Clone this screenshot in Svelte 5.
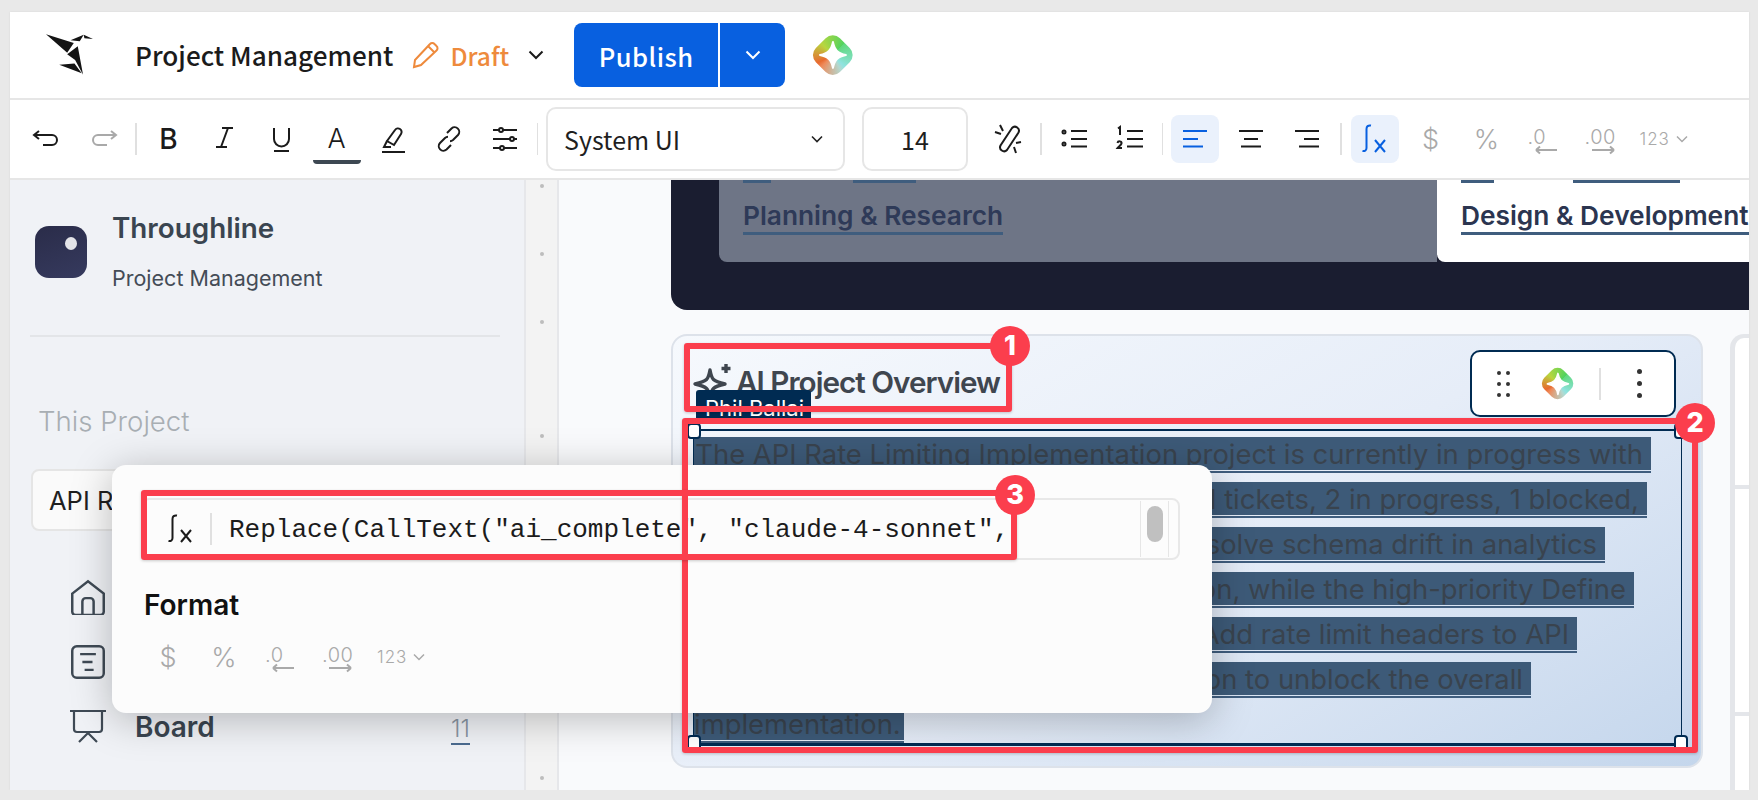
<script>
  const ic = {
    undo: "M8 8l-5 4 5 4M3 12h18a5 5 0 0 1 0 10H12",
    redo: "M24 8l5 4-5 4M29 12H11a5 5 0 0 0 0 10h9",
    italic: "M13 5h11M7 24h11M19 5l-7 19",
    underline: "M9 5v11a7.500 7.500 0 0 0 15 0V5M9 28h15",
    marker: "M10 18L18 7a3.500 3.500 0 0 1 6 4l-7 11-7-4zM10 18l-3 6h7M5 29h23",
    link: "M14 10l4.500-4.500a4.600 4.600 0 0 1 6.500 6.500l-5 5a4.600 4.600 0 0 1-3 1.200M18 22l-4.500 4.500a4.600 4.600 0 0 1-6.500-6.500l5-5a4.600 4.600 0 0 1 3-1.200",
    sliders: "M4 7h6M14 7h14M4 16h17M25 16h3M4 25h7M15 25h13M10 7a2 2 0 1 0 4 0a2 2 0 1 0-4 0M21 16a2 2 0 1 0 4 0a2 2 0 1 0-4 0M11 25a2 2 0 1 0 4 0a2 2 0 1 0-4 0",
    unlink: "M20 5a4 4 0 0 1 6.500 4.500L15 27a4 4 0 0 1-6.500-4.500zM8 2l3 6M3 9l6 2M29 19l-5 1M24 30l-2-6",
    bullets: "M13 8h16M13 16h16M13 23.500h16M4.500 9a1.500 1.500 0 1 0 3 0a1.500 1.500 0 1 0-3 0M4.500 21a1.500 1.500 0 1 0 3 0a1.500 1.500 0 1 0-3 0",
    numbered: "M13 8h16M13 16h16M13 23.500h16M4 5.500l2-1.500v8M3.500 20c.5-2.500 4.500-2 4 .5-.3 1.500-3 3-4 4.500h4.500",
    alignLeft: "M4 8h24M4 16h15M4 23.500h20",
    alignCenter: "M4 8h24M9 16h14M6 23.500h20",
    alignRight: "M4 8h24M13 16h15M8 23.500h20",
    fx: "M12 2.500c-3-.5-4.500 1-4.500 3.500v19c0 2-1.500 3.500-4 3M16 17l10 12M26 17L16 29",
    decLess: "M9 27h21M9 27l4-3.500M9 27l4 3.500",
    decMore: "M9 27h22M31 27l-4-3.500M31 27l-4 3.500",
    home: "M2 13L16 2l14 11v16a3 3 0 0 1-3 3H5a3 3 0 0 1-3-3zM11 32V20a3 3 0 0 1 3-3h4a3 3 0 0 1 3 3v12",
    list: "M6 2h20a4 4 0 0 1 4 4v20a4 4 0 0 1-4 4H6a4 4 0 0 1-4-4V6a4 4 0 0 1 4-4zM9 9h14M11 16h9M13 23h8",
    board: "M0 2h36M4 2v18a3 3 0 0 0 3 3h22a3 3 0 0 0 3-3V2M9 33l9-9 9 9"
  };

  const aiStar = "M15 7c1 5.500 2 8 3.500 9.500 2 2 5 3 11.500 4.500-6.500 1.500-9.500 2.500-11.500 4.500-1.500 1.500-2.500 4-3.500 9.500-1-5.500-2-8-3.500-9.500-2-2-5-3-11.500-4.500 6.500-1.500 9.500-2.500 11.500-4.500 1.500-1.500 2.500-4 3.500-9.500zM31 1v9M26.500 5.500h9";

  const nav = [
    { icon: ic.home, box: 32, label: "Overview" },
    { icon: ic.list, box: 32, label: "Backlog" },
    { icon: ic.board, box: 36, label: "Board", count: 11 }
  ];

  // gaps between the grip dots in the gutter
  const gripGaps = [4, 64, 64, 110, 64, 64, 64, 64, 66];

  const lines = [
    { text: "The API Rate Limiting Implementation project is currently in progress with", width: 957 },
    { text: "It has 12 total tickets, 2 in progress, 1 blocked,", width: 953 },
    { text: "and work is underway to resolve schema drift in analytics", width: 911 },
    { text: "ingestion, while the high-priority Define", width: 940 },
    { text: "Rate Limit Tiers task and Add rate limit headers to API", width: 883 },
    { text: "Documentation need attention to unblock the overall", width: 837 },
    { text: "implementation.", width: 210 }
  ];

  const handles = ["tl", "tr", "bl", "br"];
  const marks = [
    { n: 1, cls: "m1" },
    { n: 2, cls: "m2" },
    { n: 3, cls: "m3" }
  ];
</script>

{#snippet icon(d, cls = "")}
  <svg class="ico {cls}" viewBox="0 0 32 32" fill="none" stroke="currentColor" stroke-width="2"><path {d} /></svg>
{/snippet}

{#snippet sparkle(cls)}
  <span class="sparkle {cls}">
    <span class="diamond"></span>
    <svg viewBox="0 0 32 32"><path d="M16 3c1.500 8 5 11.500 13 13-8 1.500-11.500 5-13 13-1.500-8-5-11.500-13-13 8-1.500 11.500-5 13-13z" fill="#fff" stroke="#fff" stroke-width="2" stroke-linejoin="round" /></svg>
  </span>
{/snippet}

{#snippet formatBtns()}
  <span class="btn muted"><span class="fmt">$</span></span>
  <span class="btn muted"><span class="fmt">%</span></span>
  <span class="btn muted">
    <span class="dectext one">.0</span>
    {@render icon(ic.decLess, "decarrow")}
  </span>
  <span class="btn muted">
    <span class="dectext two">.00</span>
    {@render icon(ic.decMore, "decarrow")}
  </span>
  <span class="btn muted numfmt">
    123
    <svg class="chev" viewBox="0 0 12 8" fill="none" stroke="currentColor" stroke-width="1.500"><path d="M1 1.500l5 5 5-5" /></svg>
  </span>
{/snippet}

<div class="window">
  <header class="topbar">
    <svg class="logo" viewBox="100 40 155 130" fill="#141414">
      <path d="M108 44l84 26-20 30zM172 104l32-24 16 86-24-44zM148 136l46-4 22 30zM182 62l40-17-12 20zM222 45l28 13-26-2z" />
    </svg>
    <span class="doc-title">Project Management</span>
    <svg class="pencil" viewBox="0 0 28 28" fill="none" stroke="#ee8a3c" stroke-width="2"><path d="M2 26l1-7L18 3a3 3 0 0 1 4.500 0l2 2a3 3 0 0 1 0 4.500L9 24zM16 5l6.500 6.500" /></svg>
    <span class="draft">Draft</span>
    <svg class="draft-chev" viewBox="0 0 16 10" fill="none" stroke="#1a1a1a" stroke-width="2"><path d="M1.500 1.500L8 8l6.500-6.500" /></svg>
    <div class="publish">
      <span class="publish-main">Publish</span>
      <span class="publish-more">
        <svg viewBox="0 0 16 10" fill="none" stroke="#fff" stroke-width="2"><path d="M1.500 1.500L8 8l6.500-6.500" /></svg>
      </span>
    </div>
    {@render sparkle("big")}
  </header>

  <div class="toolbar">
    <span class="btn">{@render icon(ic.undo)}</span>
    <span class="btn muted">{@render icon(ic.redo)}</span>
    <i class="sep"></i>
    <span class="btn glyph bold">B</span>
    <span class="btn">{@render icon(ic.italic)}</span>
    <span class="btn">{@render icon(ic.underline)}</span>
    <span class="btn glyph color-a">A</span>
    <span class="btn">{@render icon(ic.marker)}</span>
    <span class="btn">{@render icon(ic.link)}</span>
    <span class="btn">{@render icon(ic.sliders)}</span>
    <i class="sep"></i>
    <div class="field font-field">
      <span>System UI</span>
      <svg viewBox="0 0 12 8" fill="none" stroke="#222" stroke-width="1.600"><path d="M1 1.500l5 5 5-5" /></svg>
    </div>
    <div class="field size-field">14</div>
    <span class="btn">{@render icon(ic.unlink)}</span>
    <i class="sep"></i>
    <span class="btn">{@render icon(ic.bullets)}</span>
    <span class="btn">{@render icon(ic.numbered)}</span>
    <i class="sep"></i>
    <span class="btn active">{@render icon(ic.alignLeft)}</span>
    <span class="btn">{@render icon(ic.alignCenter)}</span>
    <span class="btn">{@render icon(ic.alignRight)}</span>
    <i class="sep wide"></i>
    <span class="btn active">{@render icon(ic.fx)}</span>
    {@render formatBtns()}
  </div>

  <div class="main">
    <aside class="sidebar">
      <div class="brand">
        <span class="brand-logo"><i></i></span>
        <div class="brand-text">
          <div class="brand-name">Throughline</div>
          <div class="brand-sub">Project Management</div>
        </div>
      </div>
      <hr />
      <div class="section-label">This Project</div>
      <div class="project-select">API Rate Limiting</div>
      <ul class="nav">
        {#each nav as item}
          <li>
            <svg class="nav-ico" viewBox="0 0 {item.box} {item.box}" fill="none" stroke="currentColor" stroke-width="2.200"><path d={item.icon} /></svg>
            <span class="nav-label">{item.label}</span>
            {#if item.count}<span class="nav-count">{item.count}</span>{/if}
          </li>
        {/each}
      </ul>
    </aside>

    <div class="gutter">
      {#each gripGaps as gap}
        <i style="margin-top: {gap}px"></i>
      {/each}
    </div>

    <main class="content">
      <section class="hero">
        <div class="panel dim">
          <div class="frags"><i style="width: 28px"></i><i style="width: 63px"></i></div>
          <h3>Planning &amp; Research</h3>
        </div>
        <div class="panel lit">
          <div class="frags"><i style="width: 33px"></i><i style="width: 107px"></i></div>
          <h3>Design &amp; Development</h3>
        </div>
      </section>

      <div class="row">
        <section class="card">
          <div class="card-head">
            <h2>
              <svg class="ai-star" viewBox="0 0 36 36" fill="none" stroke="#3f464f" stroke-width="3.400" stroke-linejoin="round"><path d={aiStar} /></svg>
              AI Project Overview
            </h2>
            <div class="mini-tools">
              <span class="grip">{#each Array(6) as _}<i></i>{/each}</span>
              {@render sparkle("small")}
              <i class="mini-sep"></i>
              <span class="kebab"><i></i><i></i><i></i></span>
            </div>
          </div>
          <span class="author">Phil Ballai</span>
          <div class="selected">
            {#each handles as h}<i class="handle {h}"></i>{/each}
            {#each lines as line}
              <div class="line" style="width: {line.width}px"><span>{line.text}</span></div>
            {/each}
          </div>
        </section>
        <div class="side-col">
          <div></div>
          <div></div>
          <div></div>
        </div>
      </div>
    </main>
  </div>

  <div class="popup">
    <div class="formula">
      {@render icon(ic.fx, "fx-ico")}
      <i class="formula-sep"></i>
      <code>Replace(CallText("ai_complete", "claude-4-sonnet",</code>
      <span class="scroll"><i></i></span>
    </div>
    <h4>Format</h4>
    <div class="popup-fmt">{@render formatBtns()}</div>
  </div>

  <i class="mark a1"></i>
  <i class="mark a2"></i>
  <i class="mark a3"></i>
  {#each marks as m}
    <b class="pin {m.cls}">{m.n}</b>
  {/each}
</div>

<style>
  :global(body) {
    background: #e9e9e9;
    font-family: Inter, "Liberation Sans", sans-serif;
    overflow: hidden;
  }

  .window {
    position: relative;
    width: 1739px;
    height: 778px;
    margin: 12px 0 0 10px;
    background: #fff;
    overflow: hidden;
    box-shadow: 0 0 2px rgba(0, 0, 0, 0.08);
  }

  .topbar {
    display: flex;
    align-items: center;
    height: 86px;
    border-bottom: 2px solid #e6e6e6;
    padding-left: 33px;
    font-family: "Noto Sans CJK SC", "Noto Sans", sans-serif;
  }
  .logo {
    width: 52px;
    height: 43px;
    margin-top: -2px;
  }
  .doc-title {
    margin-left: 40px;
    font-size: 26.100px;
    font-weight: 500;
    color: #1b1b1b;
  }
  .pencil {
    width: 28px;
    height: 28px;
    margin-left: 19px;
  }
  .draft {
    margin-left: 10px;
    font-size: 24.500px;
    font-weight: 500;
    color: #ee8a3c;
  }
  .draft-chev {
    width: 16px;
    height: 10px;
    margin-left: 19px;
  }
  .publish {
    display: flex;
    height: 64px;
    margin-left: 30px;
    border-radius: 8px;
    background: #0860e0;
    color: #fff;
    overflow: hidden;
  }
  .publish-main {
    display: flex;
    align-items: center;
    justify-content: center;
    width: 144px;
    font-size: 25.500px;
    font-weight: 500;
    letter-spacing: 0.5px;
    border-right: 2px solid #fff;
  }
  .publish-more {
    display: flex;
    align-items: center;
    justify-content: center;
    width: 65px;
  }
  .publish-more svg {
    width: 16px;
    height: 10px;
  }

  .sparkle {
    position: relative;
    display: inline-flex;
    align-items: center;
    justify-content: center;
    flex: none;
  }
  .sparkle.big {
    width: 42px;
    height: 42px;
    margin-left: 27px;
  }
  .sparkle.small {
    width: 34px;
    height: 34px;
    margin: 0 -1px;
  }
  .diamond {
    width: 80%;
    height: 80%;
    border-radius: 30%;
    transform: rotate(45deg);
    background: conic-gradient(from 0deg, #5fd87a, #8fe3e0 25%, #b4d8cf 30%, #ee8a5a 50%, #e86a30 55%, #b9d63e 75%, #4fd35f 100%);
  }
  .sparkle svg {
    position: absolute;
    inset: 12%;
    width: 76%;
    height: 76%;
  }

  .toolbar {
    display: flex;
    align-items: center;
    gap: 8px;
    height: 78px;
    padding-left: 13px;
    border-bottom: 2px solid #e6e6e6;
    color: #1b1b1b;
  }
  .btn {
    position: relative;
    display: flex;
    align-items: center;
    justify-content: center;
    flex: none;
    width: 48px;
    height: 48px;
    border-radius: 8px;
  }
  .btn.muted {
    color: #a9a9a9;
  }
  .btn.active {
    background: #eaf1fc;
    color: #0860e0;
  }
  .ico {
    width: 32px;
    height: 32px;
    overflow: visible;
  }
  .glyph {
    line-height: 1;
  }
  .bold {
    font-size: 28px;
    font-weight: 500;
  }
  .color-a {
    font-weight: 300;
    font-size: 27px;
    padding-bottom: 2px;
    box-sizing: border-box;
  }
  .color-a::after {
    content: "";
    position: absolute;
    left: 0;
    right: 0;
    bottom: -1px;
    height: 4px;
    background: #3d4852;
    border-radius: 0 0 4px 4px;
  }
  .sep {
    flex: none;
    width: 1.500px;
    height: 32px;
    background: #e0e0e0;
  }
  .sep.wide {
    margin: 0 1px;
  }
  .field {
    display: flex;
    align-items: center;
    box-sizing: border-box;
    height: 64px;
    border: 2px solid #e6e6e6;
    border-radius: 10px;
    font-family: "Noto Sans CJK SC", "Noto Sans", sans-serif;
    font-size: 25px;
    color: #1f1f1f;
  }
  .font-field {
    width: 299px;
    margin-right: 9px;
    padding: 0 20px 0 16px;
    justify-content: space-between;
  }
  .font-field svg {
    width: 12px;
    height: 8px;
  }
  .size-field {
    justify-content: center;
    width: 106px;
    margin-right: 8px;
  }

  .fmt {
    font-size: 27px;
    font-weight: 300;
    line-height: 1;
  }
  .dectext {
    position: absolute;
    top: 12px;
    font-size: 20px;
    font-weight: 300;
    line-height: 20px;
    letter-spacing: 0.5px;
  }
  .dectext.one {
    left: 9px;
  }
  .dectext.two {
    left: 10px;
  }
  :global(.decarrow) {
    position: absolute;
    top: 8px;
    left: 8px;
  }
  .numfmt {
    justify-content: flex-start;
    gap: 6px;
    padding-left: 9px;
    font-size: 17px;
    font-weight: 300;
    letter-spacing: 1px;
    box-sizing: border-box;
    width: 70px;
  }
  .chev {
    flex: none;
    width: 12px;
    height: 8px;
  }

  .main {
    display: flex;
    height: 610px;
  }

  .sidebar {
    flex: none;
    box-sizing: border-box;
    width: 516px;
    background: #f0f2f6;
    border-right: 2px solid #e6e7ea;
    padding: 23px 24px 0 25px;
  }
  .brand {
    display: flex;
    gap: 25px;
    height: 132px;
    align-items: flex-start;
  }
  .brand-logo {
    position: relative;
    flex: none;
    width: 52px;
    height: 52px;
    margin-top: 23px;
    border-radius: 14px;
    background: linear-gradient(160deg, #2a2c49, #363a5e);
  }
  .brand-logo i {
    position: absolute;
    left: 30px;
    top: 11px;
    width: 12px;
    height: 13px;
    border-radius: 50%;
    background: #e4e4e8;
  }
  .brand-name {
    font-size: 27.800px;
    font-weight: 600;
    line-height: 50px;
    color: #3a4550;
  }
  .brand-sub {
    font-size: 21.500px;
    line-height: 50px;
    color: #444c56;
  }
  hr {
    height: 2px;
    border: 0;
    margin: 0 0 0 -5px;
    background: #e3e5e8;
  }
  .section-label {
    margin: 62px 0 0 3px;
    font-size: 27.600px;
    line-height: 44px;
    font-weight: 300;
    color: #a8aeb3;
  }
  .project-select {
    display: flex;
    align-items: center;
    box-sizing: border-box;
    height: 62px;
    margin: 26px 0 0 -4px;
    padding-left: 16px;
    border: 2px solid #e5e5e5;
    border-radius: 8px;
    background: #fafafa;
    font-size: 25.500px;
    color: #1f1f1f;
  }
  .nav {
    list-style: none;
    margin: 0;
    padding: 33px 0 0 35px;
  }
  .nav li {
    display: flex;
    align-items: center;
    height: 65px;
    color: #3f4a55;
  }
  .nav-ico {
    flex: none;
    width: 36px;
    height: 36px;
  }
  .nav-label {
    margin-left: 29px;
    font-size: 28px;
    font-weight: 600;
    color: #3a4550;
  }
  .nav-count {
    margin-left: auto;
    margin-top: 6px;
    margin-right: 30px;
    font-size: 24px;
    font-weight: 300;
    color: #8a96a3;
    border-bottom: 2px solid #4b6b8f;
  }

  .gutter {
    flex: none;
    width: 33px;
    display: flex;
    flex-direction: column;
    align-items: center;
    background: #f3f3f3;
    border-right: 2px solid #e6e7ea;
    box-sizing: border-box;
  }
  .gutter i {
    flex: none;
    width: 4px;
    height: 4px;
    border-radius: 50%;
    background: #bdbdbd;
  }

  .content {
    flex: 1;
    min-width: 0;
    padding-left: 112px;
    background: #f9fafc;
    overflow: hidden;
  }
  .hero {
    display: flex;
    box-sizing: border-box;
    height: 130px;
    padding: 0 0 48px 48px;
    background: #1a1d30;
    border-bottom-left-radius: 16px;
  }
  .panel {
    box-sizing: border-box;
    padding-left: 24px;
    overflow: hidden;
  }
  .panel.dim {
    flex: none;
    width: 718px;
    background: #6e7586;
    border-bottom-left-radius: 8px;
    color: #2e3a58;
  }
  .panel.lit {
    flex: 1;
    min-width: 0;
    background: #fff;
    border-bottom-left-radius: 8px;
    color: #2b3550;
  }
  .frags {
    display: flex;
    gap: 82px;
    height: 3px;
  }
  .lit .frags {
    gap: 79px;
  }
  .frags i {
    background: #3f5d7e;
  }
  .panel h3 {
    display: inline-block;
    margin: 16px 0 0;
    font-size: 26.300px;
    font-weight: 600;
    line-height: 33px;
    white-space: nowrap;
    border-bottom: 3px solid #3f5d7e;
  }

  .row {
    display: flex;
    gap: 27px;
    margin-top: 24px;
  }
  .card {
    position: relative;
    flex: none;
    box-sizing: border-box;
    width: 1032px;
    height: 434px;
    border: 2px solid #dde2ea;
    border-radius: 16px;
    background: linear-gradient(150deg, #f6f9fd 0%, #e6edf8 50%, #c4d6ec 100%);
  }
  .card-head {
    display: flex;
    justify-content: space-between;
    padding: 14px 25px 0 22px;
  }
  h2 {
    display: flex;
    align-items: center;
    margin: 10px 0 0;
    height: 44px;
    font-size: 29.700px;
    font-weight: 600;
    letter-spacing: -1px;
    color: #3f464f;
  }
  .ai-star {
    flex: none;
    width: 36px;
    height: 36px;
    margin-right: 5px;
    margin-top: -2px;
    overflow: visible;
  }
  .mini-tools {
    display: flex;
    align-items: center;
    box-sizing: border-box;
    width: 206px;
    height: 67px;
    border: 2px solid #002b52;
    border-radius: 10px;
    background: #fff;
    padding-left: 25px;
  }
  .grip {
    display: grid;
    grid-template-columns: 4px 4px;
    gap: 7px 5px;
    margin-right: 32px;
  }
  .grip i {
    width: 4px;
    height: 4px;
    border-radius: 50%;
    background: #333;
  }
  .mini-sep {
    width: 2px;
    height: 32px;
    margin: 0 36px 0 25px;
    background: #e0e0e0;
  }
  .kebab {
    display: flex;
    flex-direction: column;
    gap: 7px;
  }
  .kebab i {
    width: 5px;
    height: 5px;
    border-radius: 50%;
    background: #333;
  }
  .author {
    position: absolute;
    left: 23px;
    top: 54px;
    box-sizing: border-box;
    width: 115px;
    height: 29px;
    padding-left: 9px;
    border-radius: 3px 3px 0 0;
    background: #002b52;
    color: #fff;
    font-size: 22px;
    line-height: 37px;
    overflow: hidden;
  }
  .selected {
    position: absolute;
    left: 20px;
    top: 93px;
    box-sizing: border-box;
    width: 989px;
    height: 317px;
    padding-top: 6px;
    border: 1px solid #002b52;
    border-width: 2px 1px 3px;
  }
  .handle {
    position: absolute;
    width: 10px;
    height: 12px;
    border: 2px solid #002b52;
    border-radius: 4px;
    background: #fff;
  }
  .tl {
    left: -7px;
    top: -8px;
  }
  .tr {
    right: -7px;
    top: -8px;
  }
  .bl {
    left: -7px;
    bottom: -8px;
  }
  .br {
    right: -7px;
    bottom: -8px;
  }
  .line {
    box-sizing: border-box;
    height: 36px;
    margin-bottom: 9px;
    border-bottom: 2px solid #3f5d7e;
    overflow: hidden;
  }
  .line span {
    display: block;
    height: 33px;
    padding-right: 8px;
    background: #3d5a78;
    color: #39434e;
    font-size: 27.400px;
    line-height: 35px;
    text-align: right;
    white-space: nowrap;
    direction: rtl;
    unicode-bidi: plaintext;
  }

  .side-col {
    flex: 1;
    display: flex;
    flex-direction: column;
    height: 460px;
  }
  .side-col div {
    background: #fff;
    border-left: 5px solid #e4e6ea;
    border-top: 4px solid #e4e6ea;
    box-sizing: border-box;
  }
  .side-col div:nth-child(1) {
    height: 151px;
    border-top-left-radius: 14px;
  }
  .side-col div:nth-child(2) {
    height: 227px;
  }
  .side-col div:nth-child(3) {
    flex: 1;
  }

  .popup {
    position: absolute;
    left: 102px;
    top: 453px;
    box-sizing: border-box;
    width: 1100px;
    height: 248px;
    padding: 33px 32px 0 29px;
    border-radius: 14px;
    background: #fcfcfc;
    box-shadow: 0 6px 40px rgba(0, 0, 0, 0.26);
  }
  .formula {
    display: flex;
    align-items: center;
    box-sizing: border-box;
    height: 62px;
    padding-left: 22px;
    border: 2px solid #e8e8e8;
    border-radius: 8px;
    color: #1b1b1b;
  }
  :global(.fx-ico) {
    flex: none;
  }
  .formula-sep {
    width: 2px;
    height: 32px;
    margin: 0 17px 0 13px;
    background: #e0e0e0;
  }
  code {
    padding-top: 2px;
    font-family: "Liberation Mono", monospace;
    font-size: 26px;
    color: #1b1b1b;
  }
  .scroll {
    display: flex;
    justify-content: center;
    box-sizing: border-box;
    width: 29px;
    height: 56px;
    margin-left: auto;
    margin-right: 9px;
    padding-top: 5px;
    border: 1px solid #e6e6e6;
    border-width: 0 1px;
  }
  .scroll i {
    width: 16px;
    height: 36px;
    border-radius: 8px;
    background: #c0c0c0;
  }
  h4 {
    margin: 25px 0 0 3px;
    font-size: 28px;
    font-weight: 600;
    line-height: 40px;
    color: #111;
  }
  .popup-fmt {
    display: flex;
    gap: 8px;
    margin-top: 8px;
    margin-left: 3px;
  }

  .mark {
    position: absolute;
    box-sizing: border-box;
    border: 6px solid #fb3e4d;
    border-radius: 3px;
    box-shadow: 0 1px 3px rgba(0, 0, 0, 0.2);
  }
  .a1 {
    left: 674px;
    top: 331px;
    width: 328px;
    height: 69px;
  }
  .a2 {
    left: 672px;
    top: 406px;
    width: 1016px;
    height: 335px;
  }
  .a3 {
    left: 131px;
    top: 478px;
    width: 876px;
    height: 70px;
  }
  .pin {
    position: absolute;
    width: 40px;
    height: 40px;
    border-radius: 50%;
    background: #fb3e4d;
    color: #fff;
    font-size: 27px;
    font-weight: 800;
    line-height: 40px;
    text-align: center;
  }
  .m1 {
    left: 980px;
    top: 314px;
  }
  .m2 {
    left: 1665px;
    top: 391px;
  }
  .m3 {
    left: 985px;
    top: 463px;
  }
</style>
